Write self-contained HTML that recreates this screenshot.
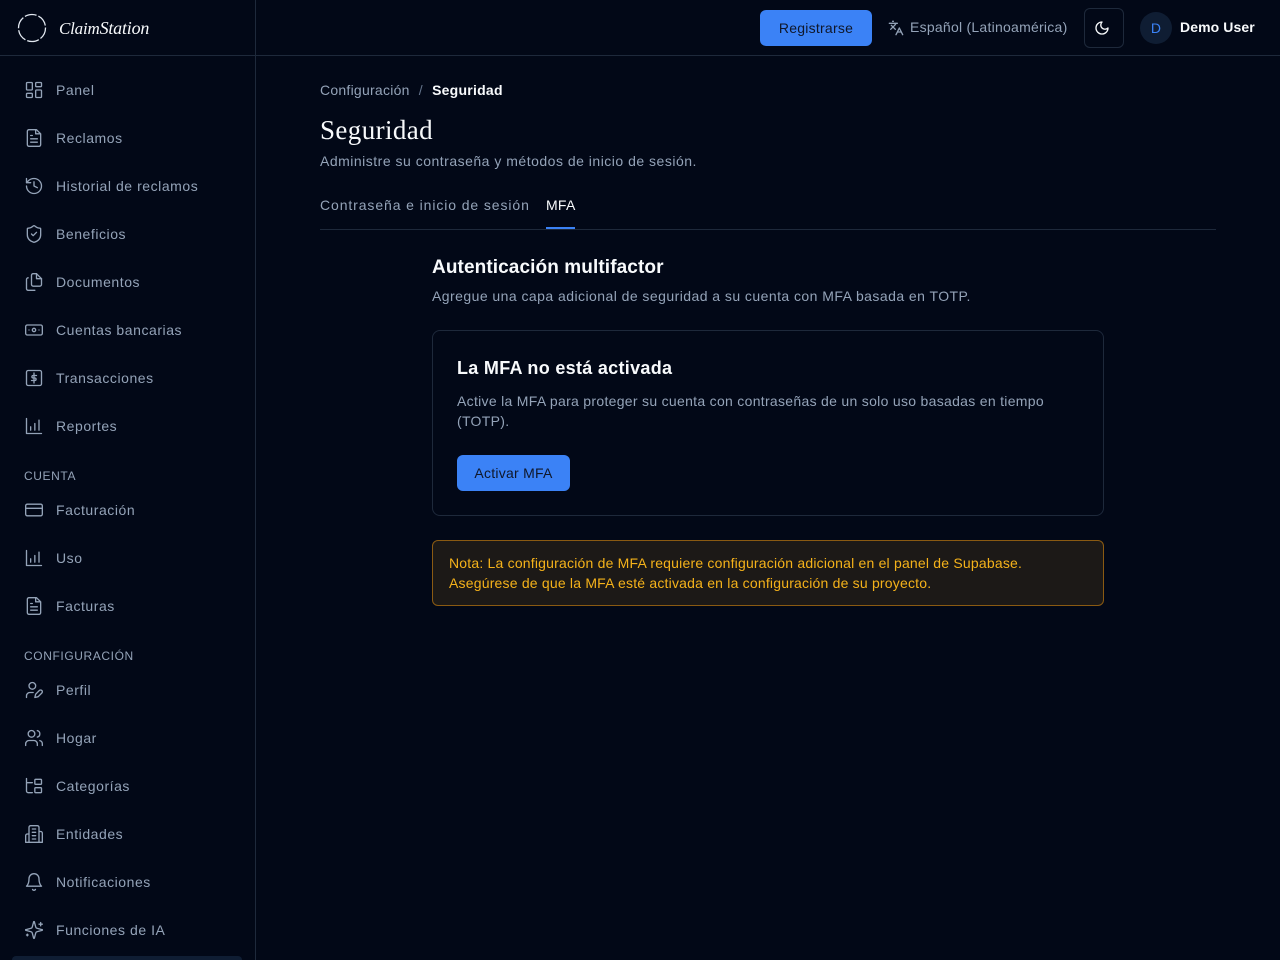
<!DOCTYPE html>
<html><head><meta charset="utf-8"><style>
*{box-sizing:border-box;margin:0;padding:0}
body{width:1280px;height:960px;background:#020817;font-family:"Liberation Sans",sans-serif;color:#f8fafc;position:relative;overflow:hidden;letter-spacing:.25px}
.side{position:absolute;left:0;top:0;width:256px;height:960px;border-right:1px solid #1e293b;overflow:hidden}
.logo{height:56px;border-bottom:1px solid #1e293b;position:relative}
.logo .t{position:absolute;left:59px;top:18px;font-family:"Liberation Serif",serif;font-style:italic;font-size:17px;color:#f8fafc;letter-spacing:-.2px}
.nav{position:absolute;left:24px;font-size:14px;color:#94a3b8;letter-spacing:.55px;display:flex;align-items:center;height:20px}
.nav svg{width:20px;height:20px;margin-right:12px;stroke:#94a3b8;fill:none;stroke-width:1.6;stroke-linecap:round;stroke-linejoin:round}
.sec{position:absolute;left:24px;font-size:12px;color:#94a3b8;letter-spacing:.6px}
.top{position:absolute;left:256px;top:0;right:0;height:56px;border-bottom:1px solid #1e293b}
.abs{position:absolute}
</style></head><body>
<div class="side">
 <div class="logo">
  <svg class="abs" style="left:16px;top:12px" width="32" height="32" viewBox="0 0 32 32"><circle cx="16" cy="16" r="13.5" fill="none" stroke="#e2e8f0" stroke-width="1.3" stroke-dasharray="12 2"/></svg>
  <span class="t">Claim<span style="font-size:18px">Station</span></span>
 </div>
 <div class="nav" style="top:80px"><svg viewBox="0 0 24 24"><rect x="3" y="3" width="7" height="9" rx="1"/><rect x="14" y="3" width="7" height="5" rx="1"/><rect x="14" y="12" width="7" height="9" rx="1"/><rect x="3" y="16" width="7" height="5" rx="1"/></svg>Panel</div>
 <div class="nav" style="top:128px"><svg viewBox="0 0 24 24"><path d="M15 2H6a2 2 0 0 0-2 2v16a2 2 0 0 0 2 2h12a2 2 0 0 0 2-2V7z"/><path d="M14 2v5h5M16 13H8M16 17H8M10 9H8"/></svg>Reclamos</div>
 <div class="nav" style="top:176px"><svg viewBox="0 0 24 24"><path d="M3 12a9 9 0 1 0 9-9 9.75 9.75 0 0 0-6.74 2.74L3 8"/><path d="M3 3v5h5M12 7v5l4 2"/></svg>Historial de reclamos</div>
 <div class="nav" style="top:224px"><svg viewBox="0 0 24 24"><path d="M20 13c0 5-3.5 7.5-7.66 8.950a1 1 0 0 1-.67-.01C7.5 20.5 4 18 4 13V6a1 1 0 0 1 1-1c2 0 4.5-1.2 6.24-2.72a1.17 1.17 0 0 1 1.52 0C14.51 3.81 17 5 19 5a1 1 0 0 1 1 1z"/><path d="m9 12 2 2 4-4"/></svg>Beneficios</div>
 <div class="nav" style="top:272px"><svg viewBox="0 0 24 24"><path d="M15 2h-4a2 2 0 0 0-2 2v11a2 2 0 0 0 2 2h8a2 2 0 0 0 2-2V8z"/><path d="M15 2v6h6M5 7a2 2 0 0 0-2 2v11a2 2 0 0 0 2 2h8"/></svg>Documentos</div>
 <div class="nav" style="top:320px"><svg viewBox="0 0 24 24"><rect x="2" y="6" width="20" height="12" rx="2"/><circle cx="12" cy="12" r="2"/><path d="M6 12h.01M18 12h.01"/></svg>Cuentas bancarias</div>
 <div class="nav" style="top:368px"><svg viewBox="0 0 24 24"><rect x="3" y="3" width="18" height="18" rx="2"/><path d="M12 6v12M15 9h-4a1.5 1.5 0 0 0 0 3h2a1.5 1.5 0 0 1 0 3H9"/></svg>Transacciones</div>
 <div class="nav" style="top:416px"><svg viewBox="0 0 24 24"><path d="M3 3v18h18M8 17v-4M13 17V9M18 17V5"/></svg>Reportes</div>
 <div class="sec" style="top:469px">CUENTA</div>
 <div class="nav" style="top:500px"><svg viewBox="0 0 24 24"><rect x="2" y="5" width="20" height="14" rx="2"/><path d="M2 10h20"/></svg>Facturación</div>
 <div class="nav" style="top:548px"><svg viewBox="0 0 24 24"><path d="M3 3v18h18M8 17v-4M13 17V9M18 17V5"/></svg>Uso</div>
 <div class="nav" style="top:596px"><svg viewBox="0 0 24 24"><path d="M15 2H6a2 2 0 0 0-2 2v16a2 2 0 0 0 2 2h12a2 2 0 0 0 2-2V7z"/><path d="M14 2v5h5M16 13H8M16 17H8M10 9H8"/></svg>Facturas</div>
 <div class="sec" style="top:649px">CONFIGURACIÓN</div>
 <div class="nav" style="top:680px"><svg viewBox="0 0 24 24"><circle cx="10" cy="7" r="4"/><path d="M3 21v-2a4 4 0 0 1 4-4h4M18.4 12.6a2 2 0 1 1 3 3L17 20l-4 1 1-4z"/></svg>Perfil</div>
 <div class="nav" style="top:728px"><svg viewBox="0 0 24 24"><circle cx="9" cy="7" r="4"/><path d="M16 21v-2a4 4 0 0 0-4-4H6a4 4 0 0 0-4 4v2M22 21v-2a4 4 0 0 0-3-3.870M16 3.13a4 4 0 0 1 0 7.75"/></svg>Hogar</div>
 <div class="nav" style="top:776px"><svg viewBox="0 0 24 24"><path d="M3 3v15a2 2 0 0 0 2 2h5M3 8h7"/><rect x="13" y="4" width="8" height="6" rx="1"/><rect x="13" y="14" width="8" height="6" rx="1"/></svg>Categorías</div>
 <div class="nav" style="top:824px"><svg viewBox="0 0 24 24"><path d="M6 22V4a2 2 0 0 1 2-2h8a2 2 0 0 1 2 2v18zM6 12H4a2 2 0 0 0-2 2v8h4M18 9h2a2 2 0 0 1 2 2v11h-4M10 6h4M10 10h4M10 14h4M10 18h4"/></svg>Entidades</div>
 <div class="nav" style="top:872px"><svg viewBox="0 0 24 24"><path d="M6 8a6 6 0 0 1 12 0c0 7 3 9 3 9H3s3-2 3-9M10.3 21a1.94 1.94 0 0 0 3.4 0"/></svg>Notificaciones</div>
 <div class="nav" style="top:920px"><svg viewBox="0 0 24 24"><path d="M9.9 15.5A2 2 0 0 0 8.5 14.1L2.4 12.5a.5.5 0 0 1 0-1l6.1-1.6A2 2 0 0 0 9.9 8.5l1.6-6.1a.5.5 0 0 1 1 0l1.6 6.1a2 2 0 0 0 1.4 1.4l6.1 1.6a.5.5 0 0 1 0 1l-6.1 1.6a2 2 0 0 0-1.4 1.4l-1.6 6.1a.5.5 0 0 1-1 0z"/><path d="M20 3v4M22 5h-4M4 17v2M5 18H3"/></svg>Funciones de IA</div>
 <div class="abs" style="left:12px;top:956px;width:230px;height:8px;border-radius:6px;background:#0f1d33"></div>
</div>
<div class="top">
 <div class="abs" style="left:504px;top:10px;width:112px;height:36px;background:#3b82f6;border-radius:6px;color:#0f172a;font-size:14px;line-height:36px;text-align:center">Registrarse</div>
 <svg class="abs" style="left:632px;top:20px" width="16" height="16" viewBox="0 0 24 24" fill="none" stroke="#94a3b8" stroke-width="2" stroke-linecap="round" stroke-linejoin="round"><path d="m5 8 6 6M4 14l6-6 2-3M2 5h12M7 2h1M22 22l-5-10-5 10M14 18h6"/></svg>
 <div class="abs" style="left:654px;top:19px;font-size:14px;color:#94a3b8">Español (Latinoamérica)</div>
 <div class="abs" style="left:828px;top:8px;width:40px;height:40px;border:1px solid #1e293b;border-radius:6px"></div>
 <svg class="abs" style="left:838px;top:20px" width="16" height="16" viewBox="0 0 24 24" fill="none" stroke="#f8fafc" stroke-width="2" stroke-linecap="round" stroke-linejoin="round"><path d="M12 3a6 6 0 0 0 9 9 9 9 0 1 1-9-9Z"/></svg>
 <div class="abs" style="left:884px;top:12px;width:32px;height:32px;border-radius:50%;background:#0f1d33;color:#3b82f6;font-size:14px;line-height:32px;text-align:center">D</div>
 <div class="abs" style="left:924px;top:19px;font-size:14px;color:#f8fafc;font-weight:bold;letter-spacing:.1px">Demo User</div>
</div>
<div class="abs" style="left:320px;top:82px;font-size:14px;color:#94a3b8">Configuración <span style="margin:0 5px;color:#64748b">/</span> <span style="color:#f8fafc;font-weight:bold">Seguridad</span></div>
<div class="abs" style="left:320px;top:115px;font-family:'Liberation Serif',serif;font-size:27px;color:#f8fafc;letter-spacing:.4px">Seguridad</div>
<div class="abs" style="left:320px;top:153px;font-size:14px;color:#94a3b8;letter-spacing:.5px">Administre su contraseña y métodos de inicio de sesión.</div>
<div class="abs" style="left:320px;top:229px;width:896px;height:1px;background:#1e293b"></div>
<div class="abs" style="left:320px;top:197px;font-size:14px;color:#94a3b8;letter-spacing:.9px">Contraseña e inicio de sesión</div>
<div class="abs" style="left:546px;top:197px;font-size:14px;color:#f8fafc">MFA</div>
<div class="abs" style="left:546px;top:227px;width:29px;height:2px;background:#3b82f6"></div>
<div class="abs" style="left:432px;top:257px;font-size:19px;font-weight:bold;color:#f8fafc;letter-spacing:.1px">Autenticación multifactor</div>
<div class="abs" style="left:432px;top:288px;font-size:14px;color:#94a3b8;letter-spacing:.45px">Agregue una capa adicional de seguridad a su cuenta con MFA basada en TOTP.</div>
<div class="abs" style="left:432px;top:330px;width:672px;height:186px;border:1px solid #1e293b;border-radius:8px">
 <div class="abs" style="left:24px;top:27px;font-size:18px;font-weight:bold;color:#f8fafc;letter-spacing:.3px">La MFA no está activada</div>
 <div class="abs" style="left:24px;top:60px;width:620px;font-size:14px;line-height:20px;color:#94a3b8;letter-spacing:.3px">Active la MFA para proteger su cuenta con contraseñas de un solo uso basadas en tiempo<br>(TOTP).</div>
 <div class="abs" style="left:24px;top:124px;width:113px;height:36px;background:#3b82f6;border-radius:6px;color:#0f172a;font-size:14px;line-height:36px;text-align:center">Activar MFA</div>
</div>
<div class="abs" style="left:432px;top:540px;width:672px;height:66px;border:1px solid #8a5a12;border-radius:6px;background:#1c1917;padding:12px 16px;font-size:14px;line-height:20px;color:#f5b21a;letter-spacing:.2px">Nota: La configuración de MFA requiere configuración adicional en el panel de Supabase.<br>Asegúrese de que la MFA esté activada en la configuración de su proyecto.</div>
</body></html>
